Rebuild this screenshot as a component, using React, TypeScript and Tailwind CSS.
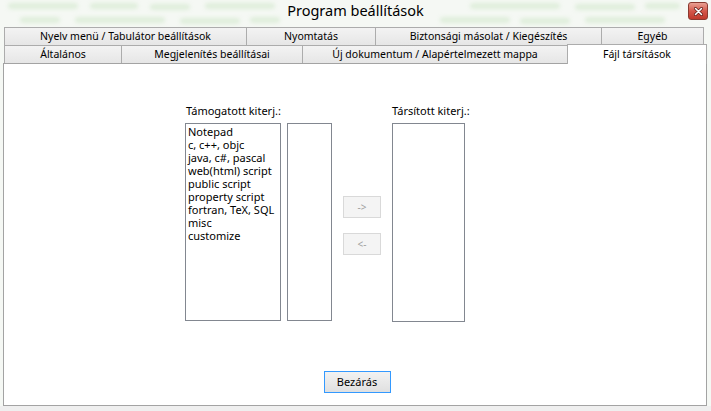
import React from "react";

const font = { fontFamily: '"Noto Sans", "Open Sans", sans-serif' };

function Tab({ label, w, last }: { label: string; w: number; last?: boolean }) {
  return (
    <div
      className={`h-full flex items-center justify-center border-t border-l border-[#acacac] bg-gradient-to-b from-[#f3f3f3] to-[#e6e6e6] text-[10.5px] text-black ${last ? "border-r" : ""}`}
      style={{ width: w }}
    >
      {label}
    </div>
  );
}

const blurBars = [
  { l: 8, t: 3, w: 70 }, { l: 90, t: 3, w: 48 }, { l: 150, t: 4, w: 40 }, { l: 205, t: 3, w: 70 },
  { l: 470, t: 3, w: 90 }, { l: 575, t: 4, w: 60 }, { l: 645, t: 3, w: 35 },
  { l: 20, t: 17, w: 40 }, { l: 75, t: 17, w: 90 }, { l: 180, t: 18, w: 60 }, { l: 250, t: 17, w: 30 },
  { l: 440, t: 17, w: 70 }, { l: 520, t: 18, w: 50 }, { l: 585, t: 17, w: 80 },
];

export default function App() {
  const items = [
    "Notepad",
    "c, c++, objc",
    "java, c#, pascal",
    "web(html) script",
    "public script",
    "property script",
    "fortran, TeX, SQL",
    "misc",
    "customize",
  ];
  return (
    <div className="w-[711px] h-[411px] bg-[#f5f8f4] flex flex-col overflow-hidden relative" style={font}>
      {/* blurred aero glass background */}
      <div className="absolute left-0 top-0 w-full h-[30px] overflow-hidden pointer-events-none">
        {blurBars.map((b, i) => (
          <div
            key={i}
            className="absolute h-[6px] rounded-full bg-[#cfe7c9] blur-[2px] opacity-60"
            style={{ left: b.l, top: b.t, width: b.w }}
          />
        ))}
      </div>

      {/* title bar */}
      <div className="relative h-[27px] flex items-start justify-center shrink-0">
        <div className="mt-[1px] text-[14.5px] text-black leading-[18px]">Program beállítások</div>
        <div className="absolute right-[3px] top-[2px] w-[20px] h-[18px] rounded-[3px] border border-[#8a3a30] bg-gradient-to-b from-[#e8a093] via-[#d4574a] to-[#c0392b] flex items-center justify-center">
          <svg width="9" height="9" viewBox="0 0 9 9">
            <path d="M1.5 1.5 L7.5 7.5 M7.5 1.5 L1.5 7.5" stroke="#5a1a14" strokeWidth="3" strokeLinecap="round" />
            <path d="M1.5 1.5 L7.5 7.5 M7.5 1.5 L1.5 7.5" stroke="#ffffff" strokeWidth="1.6" strokeLinecap="round" />
          </svg>
        </div>
      </div>

      {/* tabs row 1 */}
      <div className="relative flex h-[18px] ml-[4px] shrink-0">
        <Tab label="Nyelv menü / Tabulátor beállítások" w={242} />
        <Tab label="Nyomtatás" w={129} />
        <Tab label="Biztonsági másolat / Kiegészítés" w={226} />
        <Tab label="Egyéb" w={103} last />
      </div>
      {/* tabs row 2 */}
      <div className="relative z-10 flex items-end h-[18px] ml-[4px] shrink-0">
        <Tab label="Általános" w={117} />
        <Tab label="Megjelenítés beállításai" w={181} />
        <Tab label="Új dokumentum / Alapértelmezett mappa" w={265} />
        <div className="relative w-[140px] h-[20px] -mb-[1px] bg-white border-t border-l border-r border-[#acacac] flex items-start justify-center text-[10.5px] text-black leading-[16px]">
          <span className="mt-[1px]">Fájl társítások</span>
        </div>
      </div>

      {/* panel */}
      <div className="ml-[3px] w-[704px] h-[343px] bg-white border border-[#a3a3a3] shrink-0 flex flex-col">
        <div className="flex ml-[181px] mt-[39px]">
          <div className="flex flex-col">
            <div className="h-[16px] leading-[16px] text-[11px] text-black ml-[1px] mb-[4px]">Támogatott kiterj.:</div>
            <div className="flex">
              <div className="w-[96px] h-[198px] border border-[#828790] bg-white pt-[1px] pl-[2px]">
                {items.map((t) => (
                  <div key={t} className="text-[11px] leading-[13px] text-black whitespace-nowrap">
                    {t}
                  </div>
                ))}
              </div>
              <div className="ml-[6px] w-[45px] h-[198px] border border-[#828790] bg-white" />
            </div>
          </div>
          <div className="flex flex-col ml-[11px] mt-[93px]">
            <div className="w-[38px] h-[22px] border border-[#d9d9d9] bg-[#f4f4f4] flex items-center justify-center text-[10px] text-[#a0a0a0]">
              -&gt;
            </div>
            <div className="mt-[15px] w-[38px] h-[22px] border border-[#d9d9d9] bg-[#f4f4f4] flex items-center justify-center text-[10px] text-[#a0a0a0]">
              &lt;-
            </div>
          </div>
          <div className="flex flex-col ml-[11px]">
            <div className="h-[16px] leading-[16px] text-[11px] text-black mb-[4px]">Társított kiterj.:</div>
            <div className="w-[73px] h-[199px] border border-[#828790] bg-white" />
          </div>
        </div>
        <div className="flex justify-center pl-[4px] mt-[49px]">
          <div className="w-[67px] h-[22px] border border-[#3399ff] bg-gradient-to-b from-[#f2f2f2] to-[#e0e0e0] flex items-center justify-center text-[11px] text-black">
            Bezárás
          </div>
        </div>
      </div>
      <div className="flex-1 bg-[#efefef]" />
    </div>
  );
}
